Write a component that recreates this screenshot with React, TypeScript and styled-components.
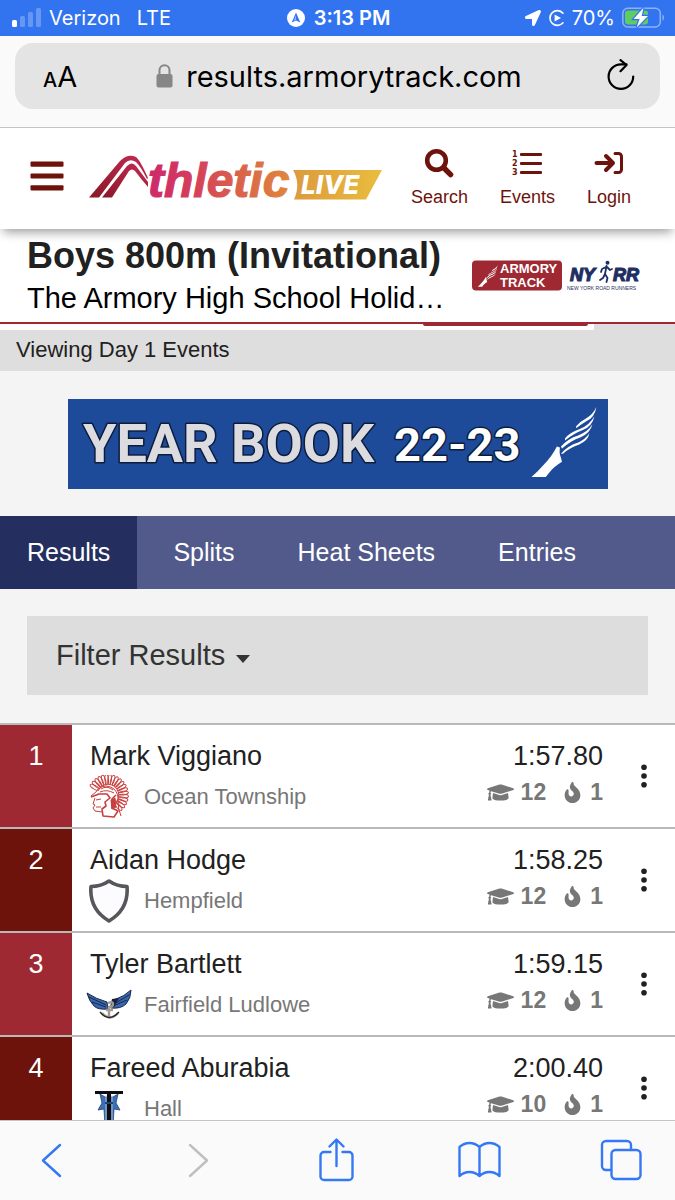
import React, { ReactElement } from "react";
import { FaFire, FaGraduationCap, FaLocationArrow } from "react-icons/fa";
import styled, { createGlobalStyle } from "styled-components";

export enum Theme {
  CHROME = "chrome",
  STATUSBAR = "statusbar",
  TINT = "tint",
  PAGE = "page",
  WHITE = "white",
  MAROON = "maroon",
  RED = "red",
  TAB = "tab",
  TABACTIVE = "tabactive",
  STRIP = "strip",
  LINE = "line",
  TEXT = "text",
  MUTED = "muted",
}

export const ThemeColors = {
  [Theme.CHROME]: "#fafafa",
  [Theme.STATUSBAR]: "#3274f0",
  [Theme.TINT]: "#3478f6",
  [Theme.PAGE]: "#f4f4f4",
  [Theme.WHITE]: "#ffffff",
  [Theme.MAROON]: "#6d130c",
  [Theme.RED]: "#9e2932",
  [Theme.TAB]: "#525a8b",
  [Theme.TABACTIVE]: "#242f60",
  [Theme.STRIP]: "#dedede",
  [Theme.LINE]: "#b9b9b9",
  [Theme.TEXT]: "#212121",
  [Theme.MUTED]: "#777777",
};

const GlobalStyle = createGlobalStyle`
  * {
    box-sizing: border-box;
  }
  body {
    margin: 0;
    background-color: ${ThemeColors.page};
    color: ${ThemeColors.text};
    font-family: "Liberation Sans", Arial, sans-serif;
  }
  button {
    padding: 0;
    border: 0;
    background: none;
    color: inherit;
    font: inherit;
    cursor: pointer;
  }
  a {
    color: inherit;
    text-decoration: none;
  }
  svg {
    display: block;
    flex: none;
  }
`;

const Screen = styled.div`
  display: flex;
  flex-direction: column;
  height: 100vh;
`;

const StatusBar = styled.div`
  display: grid;
  grid-template-columns: 1fr auto 1fr;
  align-items: center;
  height: 36px;
  padding: 0 10px 0 12px;
  background-color: ${ThemeColors.statusbar};
  color: ${ThemeColors.white};
  font-family: Inter, sans-serif;
  font-size: 20px;
`;

const StatusGroup = styled.div<{ $align?: string; $gap?: number }>`
  display: flex;
  align-items: center;
  justify-content: ${({ $align }) => $align || "flex-start"};
  gap: ${({ $gap }) => $gap || 7}px;
`;

const Carrier = styled.span`
  margin-right: 9px;
`;

const Clock = styled.time`
  font-weight: 600;
`;

const AddressBar = styled.div`
  padding: 7px 15px 18px;
  border-bottom: 1px solid #c3c6c9;
  background-color: ${ThemeColors.chrome};
`;

const AddressField = styled.div`
  display: grid;
  grid-template-columns: 1fr auto 1fr;
  align-items: center;
  height: 66px;
  padding: 0 25px 0 28px;
  border-radius: 18px;
  background-color: #e5e4e5;
  color: #000000;
  font-family: Inter, sans-serif;
`;

const TextSizeButton = styled.button`
  justify-self: start;
  font-size: 29px;
  small {
    font-size: 20px;
    font-weight: 500;
  }
`;

const AddressButton = styled.button`
  display: flex;
  align-items: center;
  gap: 13px;
  font-size: 29px;
`;

const ReloadButton = styled.button`
  justify-self: end;
`;

const Viewport = styled.main`
  flex: 1;
  min-height: 0;
  overflow: hidden;
`;

const SiteHeader = styled.header`
  position: relative;
  z-index: 1;
  display: flex;
  align-items: center;
  height: 101px;
  padding: 0 44px 6px 30px;
  background-color: ${ThemeColors.white};
  box-shadow: 0 6px 10px -3px rgba(0, 0, 0, 0.4);
  color: ${ThemeColors.maroon};
`;

const SiteLogo = styled.a`
  margin-left: 24px;
`;

const SiteNav = styled.nav`
  display: flex;
  gap: 32px;
  margin-left: auto;
  padding-top: 4px;
`;

const SiteNavLink = styled.a`
  display: flex;
  flex-direction: column;
  align-items: center;
  gap: 8px;
  font-size: 18px;
  line-height: 22px;
`;

const EventHeader = styled.section`
  display: flex;
  align-items: center;
  gap: 24px;
  height: 95px;
  padding: 0 33px 0 27px;
  border-bottom: 2px solid ${ThemeColors.red};
  background-color: ${ThemeColors.white};
`;

const EventTitles = styled.div`
  flex: 1;
  min-width: 0;
`;

const EventTitle = styled.h1`
  margin: 0;
  font-size: 36px;
  line-height: 44px;
  white-space: nowrap;
`;

const MeetTitle = styled.div`
  overflow: hidden;
  color: #000000;
  font-size: 29px;
  line-height: 40px;
  text-overflow: ellipsis;
  white-space: nowrap;
`;

const Sponsors = styled.div`
  display: flex;
  gap: 5px;
`;

const DayStrip = styled.div`
  background-color: ${ThemeColors.strip};
`;

/* bottom edge of the full header that has scrolled behind the sticky one */
const ScrolledEdge = styled.div`
  display: flex;
  justify-content: flex-end;
  width: 88%;
  height: 6px;
  padding-right: 6px;
  background-color: ${ThemeColors.white};
  &::after {
    content: "";
    width: 28%;
    height: 2px;
    border-radius: 0 0 4px 4px;
    background-color: ${ThemeColors.red};
  }
`;

const DayLabel = styled.p`
  margin: 0;
  padding: 6px 16px 7px;
  font-size: 22px;
  line-height: 28px;
`;

const Banner = styled.a`
  display: flex;
  justify-content: center;
  padding: 28px 0 27px;
`;

const Tabs = styled.nav`
  display: flex;
  gap: 9px;
  background-color: ${ThemeColors.tab};
`;

const Tab = styled.button<{ $active?: boolean }>`
  height: 73px;
  padding: 0 27px;
  background-color: ${({ $active }) =>
    $active ? ThemeColors.tabactive : "transparent"};
  color: ${ThemeColors.white};
  font-size: 25px;
`;

const FilterButton = styled.button`
  display: flex;
  align-items: center;
  gap: 11px;
  width: calc(100% - 54px);
  height: 79px;
  margin: 27px 27px 28px;
  padding: 0 29px;
  background-color: #dddddd;
  color: #333333;
  font-size: 29px;
`;

const Caret = styled.span`
  margin-top: 6px;
  border-top: 8px solid currentColor;
  border-right: 7px solid transparent;
  border-left: 7px solid transparent;
`;

const ResultList = styled.ol`
  margin: 0;
  padding: 0;
  list-style: none;
`;

const ResultRow = styled.li`
  display: flex;
  border-top: 2px solid ${ThemeColors.line};
  background-color: ${ThemeColors.white};
  font-size: 27px;
  line-height: 30px;
`;

const Rank = styled.div<{ $even: boolean }>`
  width: 72px;
  padding-top: 16px;
  background-color: ${({ $even }) =>
    $even ? ThemeColors.maroon : ThemeColors.red};
  color: ${ThemeColors.white};
  text-align: center;
`;

const Athlete = styled.div`
  flex: 1;
  padding: 16px 0 9px 16px;
`;

const AthleteName = styled.div`
  padding-left: 2px;
`;

const Team = styled.div`
  display: flex;
  align-items: center;
  gap: 14px;
  height: 42px;
  margin-top: 5px;
  color: ${ThemeColors.muted};
  font-size: 22px;
`;

const CrestBox = styled.span`
  display: flex;
  justify-content: center;
  width: 42px;
`;

const Mark = styled.div`
  padding-top: 16px;
  text-align: right;
`;

const Stats = styled.div`
  display: flex;
  align-items: center;
  justify-content: flex-end;
  margin-top: 7px;
  color: ${ThemeColors.muted};
  font-size: 23px;
  font-weight: bold;
  line-height: 28px;
`;

const Stat = styled.span`
  display: flex;
  align-items: center;
  gap: 7px;
  margin-left: 16px;
`;

const MenuButton = styled.button`
  display: grid;
  justify-content: center;
  align-content: center;
  width: 62px;
  margin-left: 10px;
`;

const Toolbar = styled.nav`
  display: flex;
  justify-content: space-between;
  align-items: center;
  height: 80px;
  padding: 0 32px 2px 29px;
  border-top: 1px solid #c4c4c4;
  background-color: ${ThemeColors.chrome};
  color: ${ThemeColors.tint};
`;

const ToolbarButton = styled.button`
  width: 44px;
  height: 44px;
  &:disabled {
    color: #bfbfbf;
  }
`;

const SignalIcon = (): ReactElement => (
  <svg width="30" height="20" viewBox="0 0 30 20" fill="#fff">
    <rect x="0" y="12" width="5" height="7" rx="1.5" />
    <g opacity="0.25">
      <rect x="8" y="8" width="5" height="11" rx="1.5" />
      <rect x="16" y="4" width="5" height="15" rx="1.5" />
      <rect x="24" y="0" width="5" height="19" rx="1.5" />
    </g>
  </svg>
);

const NavigationIcon = (): ReactElement => (
  <svg width="18" height="18" viewBox="0 0 18 18">
    <circle cx="9" cy="9" r="9" fill="#fff" />
    <path
      d="M9 3.4l4.3 10.2L9 11.4l-4.3 2.2z"
      fill={ThemeColors.statusbar}
    />
    <path d="M9 6.2v4.6l-2.3 1z" fill="#fff" opacity="0.5" />
  </svg>
);

const CarPlayIcon = (): ReactElement => (
  <svg width="17" height="18" viewBox="0 0 17 18" fill="none">
    <path
      d="M15 4.2A7.4 7.4 0 1 0 15 13.8"
      stroke="#fff"
      strokeWidth="1.6"
      strokeLinecap="round"
    />
    <path d="M6.6 5.6l6.4 3.4-6.4 3.4z" fill="#fff" />
  </svg>
);

const BatteryIcon = (): ReactElement => (
  <svg width="43" height="22" viewBox="0 0 43 22" fill="none">
    <rect
      x="0.8"
      y="1.3"
      width="37.5"
      height="18.6"
      rx="5"
      stroke="#fff"
      strokeOpacity="0.45"
      strokeWidth="1.5"
    />
    <path d="M40.5 7.5c2 1.2 2 5 0 6.2z" fill="#fff" opacity="0.45" />
    <rect x="3" y="3.6" width="23" height="14" rx="3" fill="#5fcb63" />
    <path
      d="M21.5 0.8L11.6 12h6l-3 8.4L26 8.9h-6.3z"
      fill="#fff"
      stroke={ThemeColors.statusbar}
      strokeWidth="2.4"
      paintOrder="stroke"
    />
  </svg>
);

const LockIcon = (): ReactElement => (
  <svg width="17" height="24" viewBox="0 0 17 24">
    <path
      d="M3.5 11V6.3a5 5 0 0 1 10 0V11"
      fill="none"
      stroke="#868686"
      strokeWidth="2"
    />
    <rect x="0.5" y="10" width="16" height="13.5" rx="2" fill="#868686" />
  </svg>
);

const ReloadIcon = (): ReactElement => (
  <svg
    width="28"
    height="34"
    viewBox="0 0 28 34"
    fill="none"
    stroke="#000"
    strokeWidth="2.2"
    strokeLinecap="round"
    strokeLinejoin="round"
  >
    <path d="M26.2 17.5A12.3 12.3 0 1 1 14 5.3h5.5" />
    <path d="M13.5 1.1l6 4.9-6 6.2" />
  </svg>
);

const MenuIcon = (): ReactElement => (
  <svg width="34" height="30" viewBox="0 0 34 30" fill="currentColor">
    <rect x="0.5" y="0.5" width="33" height="5.2" rx="1" />
    <rect x="0.5" y="12.4" width="33" height="5.2" rx="1" />
    <rect x="0.5" y="24.2" width="33" height="5.2" rx="1" />
  </svg>
);

const AthleticLiveLogo = (): ReactElement => (
  <svg width="296" height="54" viewBox="0 -4 296 54">
    <defs>
      <linearGradient id="peak" x1="0" y1="1" x2="0.8" y2="0">
        <stop offset="0" stopColor="#8a1826" />
        <stop offset="1" stopColor="#bd2950" />
      </linearGradient>
      <linearGradient
        id="word"
        gradientUnits="userSpaceOnUse"
        x1="60"
        y1="0"
        x2="206"
        y2="0"
      >
        <stop offset="0" stopColor="#cc2a6b" />
        <stop offset="0.3" stopColor="#d43d5b" />
        <stop offset="0.6" stopColor="#d9604c" />
        <stop offset="1" stopColor="#e08a3a" />
      </linearGradient>
      <linearGradient id="live" x1="0" y1="0" x2="1" y2="0">
        <stop offset="0" stopColor="#dd9a3c" />
        <stop offset="1" stopColor="#e9bd3f" />
      </linearGradient>
    </defs>
    <path
      d="M1 44.5L32 8Q40 0 48 4Q52 7 60 25L59 26Q53 14 48 9Q42 5 37 10L11 44.5z"
      fill="url(#peak)"
    />
    <path
      d="M14 44.5L39 13Q44 8 48 13L60 29V34Q53 26 47 18Q44 15 41 18L24 44.5z"
      fill="url(#peak)"
    />
    <text
      x="60"
      y="44"
      fill="url(#word)"
      stroke="url(#word)"
      strokeWidth="1.2"
      fontFamily="Liberation Sans, sans-serif"
      fontSize="48"
      fontStyle="italic"
      fontWeight="bold"
    >
      thletic
    </text>
    <path d="M205 17H294L278 46.5H206Q213 31 205 17z" fill="url(#live)" />
    <text
      x="213"
      y="41"
      fill="#fff"
      fontFamily="Inter, Liberation Sans, sans-serif"
      fontSize="26"
      fontStyle="italic"
      fontWeight="800"
    >
      LIVE
    </text>
  </svg>
);

const SearchIcon = (): ReactElement => (
  <svg
    width="30"
    height="30"
    viewBox="0 0 30 30"
    fill="none"
    stroke="currentColor"
    strokeWidth="4.6"
  >
    <circle cx="12.5" cy="12.5" r="9.3" />
    <path d="M20 20l6.6 6.6" strokeWidth="5.4" strokeLinecap="round" />
  </svg>
);

const EventsIcon = (): ReactElement => (
  <svg
    width="30"
    height="30"
    viewBox="0 0 30 30"
    fill="currentColor"
    fontFamily="DejaVu Sans, sans-serif"
    fontSize="8"
    fontWeight="bold"
  >
    <text x="0" y="9">1</text>
    <text x="0" y="18">2</text>
    <text x="0" y="27">3</text>
    <rect x="8" y="5" width="22" height="3" rx="1" />
    <rect x="8" y="14" width="22" height="3" rx="1" />
    <rect x="8" y="23" width="22" height="3" rx="1" />
  </svg>
);

const LoginIcon = (): ReactElement => (
  <svg
    width="30"
    height="30"
    viewBox="0 0 30 30"
    fill="none"
    stroke="currentColor"
    strokeWidth="4"
    strokeLinecap="round"
    strokeLinejoin="round"
  >
    <path d="M2.5 15H18M12 8l7 7-7 7" />
    <path d="M21 5.5h3.500a3 3 0 0 1 3 3v13a3 3 0 0 1-3 3H21" strokeWidth="3" />
  </svg>
);

/* winged foot shared by the banner and the Armory badge */
const WingedFoot = (): ReactElement => (
  <g fill="#fff">
    <path d="M0 69Q6 64 12 57Q20 49 25 39L28 40Q27 46 29 50L30 54Q22 59 18 64L14 69z" />
    <path d="M29 46Q36 38 46 35Q53 32 57 26Q56 33 47 37Q38 40 31 46z" />
    <path d="M29 39Q36 31 46 28Q56 24 60 17Q58 26 48 30Q39 33 30 41z" />
    <path d="M33 31Q38 25 47 22Q57 18 62 9Q60 19 50 23Q42 26 33 33z" />
    <path d="M44 19Q48 14 54 11Q60 8 64 0Q62 11 54 14Q49 17 44 21z" />
  </g>
);

const ArmoryTrackLogo = (): ReactElement => (
  <svg width="90" height="31" viewBox="0 0 90 31">
    <rect width="90" height="30" y="0.5" rx="4" fill={ThemeColors.red} />
    <svg x="5" y="5" width="22" height="22" viewBox="0 0 65 70">
      <WingedFoot />
    </svg>
    <g
      fill="#fff"
      fontFamily="Liberation Sans, sans-serif"
      fontSize="13"
      fontWeight="bold"
    >
      <text x="28" y="13">ARMORY</text>
      <text x="28" y="27">TRACK</text>
    </g>
  </svg>
);

const RoadRunnersLogo = (): ReactElement => (
  <svg width="75" height="31" viewBox="0 0 75 31" fill="#1f2f63">
    <g
      fontFamily="Liberation Sans, sans-serif"
      fontSize="18"
      fontStyle="italic"
      fontWeight="bold"
      stroke="#1f2f63"
      strokeWidth="1.2"
    >
      <text x="3" y="21">NY</text>
      <text x="46" y="21">RR</text>
    </g>
    <circle cx="40.5" cy="2.8" r="2" />
    <path
      d="M39.5 6l-1.5 8 2.500 4-1 4M38 14l-2 4-3 2M39 7l-4 2-1 3M40 7l3 3 2-1"
      fill="none"
      stroke="#1f2f63"
      strokeWidth="1.8"
      strokeLinecap="round"
      strokeLinejoin="round"
    />
    <text
      x="0"
      y="30"
      fontFamily="Liberation Sans, sans-serif"
      fontSize="5"
    >
      NEW YORK ROAD RUNNERS
    </text>
  </svg>
);

const YearBookBanner = (): ReactElement => (
  <svg width="540" height="90" viewBox="0 0 540 90">
    <rect width="540" height="90" fill="#1d4b9a" />
    <g
      fontFamily="Roboto, Liberation Sans, sans-serif"
      fontWeight="bold"
      stroke="#0c1c3c"
      strokeWidth="3"
      strokeLinejoin="round"
      paintOrder="stroke"
    >
      <text x="15" y="63" fontSize="54" fill="#dcdce0">
        YEAR BOOK
      </text>
      <text x="326" y="62" fontSize="47" fill="#fff">
        22-23
      </text>
    </g>
    <svg x="462" y="8" width="70" height="71" viewBox="0 0 66 70">
      <WingedFoot />
    </svg>
  </svg>
);

const plumeAngles = Array.from({ length: 19 }, (_, i) => -150 + i * 11);

const TrojanCrest = (): ReactElement => (
  <svg
    width="42"
    height="44"
    viewBox="0 0 42 44"
    fill="none"
    stroke="#c8403f"
    strokeWidth="1"
    strokeLinejoin="round"
  >
    {plumeAngles.map((angle) => {
      const rad = (angle * Math.PI) / 180;
      const x = 20 + Math.cos(rad) * 15.5;
      const y = 20 + Math.sin(rad) * 15.5;
      return (
        <ellipse
          key={angle}
          cx={x}
          cy={y}
          rx="5"
          ry="1.8"
          transform={`rotate(${angle} ${x} ${y})`}
        />
      );
    })}
    <path d="M3 21Q9 17 10 14Q18 8 26 14Q31 19 30 27Q30 34 33 41" />
    <path
      d="M3 22L11 19L19 19L22 23L17 27L18 31L14 34L15 41L26 42L30 36L24 33L24 24L28 20"
      strokeWidth="1.6"
    />
    <path d="M7 23L5 29L7 30L5 33L7 36L14 37M8 25l5-1M8 32h5" />
    <path d="M23 25l4-2 1 9-4 2z" fill="#c8403f" />
    <path d="M13 14q6-4 12 1M12 17q7-3 14 1" />
  </svg>
);

const ShieldCrest = (): ReactElement => (
  <svg width="42" height="44" viewBox="0 0 42 44">
    <path
      d="M21 2Q29 7.5 39 7.5Q41 30 21 42Q1 30 3 7.5Q13 7.5 21 2z"
      fill="#fcfcff"
      stroke="#55575a"
      strokeWidth="3.6"
      strokeLinejoin="round"
    />
  </svg>
);

const FalconCrest = (): ReactElement => (
  <svg width="46" height="32" viewBox="0 0 46 32">
    <path
      d="M1 4Q10 10 21 13L22 20Q12 21 8 17Q3 12 1 4zM45 1Q39 7 28 11L25 19Q35 20 40 15Q45 9 45 1z"
      fill="#3767b0"
      stroke="#1b2747"
      strokeWidth="1"
    />
    <path
      d="M3 8l17 8M6 13l14 5M43 6L28 15M41 11l-14 6"
      stroke="#1b2747"
      strokeWidth="1"
    />
    <path d="M26 10l7-1-5 9h-4z" fill="#17213c" />
    <path
      d="M22 14q5-2 5 1t-4 3v9M20 21h7M16 24q8 9 16 0"
      fill="none"
      stroke="#a29b91"
      strokeWidth="2.4"
    />
    <path
      d="M14 23q9 11 19 0"
      fill="none"
      stroke="#25262c"
      strokeWidth="1.3"
    />
  </svg>
);

const HallCrest = (): ReactElement => (
  <svg width="42" height="42" viewBox="0 0 42 42">
    <path
      d="M12 6L17 9H25L30 6L28 15L32 22L26 21L25 38L21 41L17 38L16 21L10 22L14 15z"
      fill="#3a70b8"
      stroke="#1d4377"
      strokeWidth="0.8"
    />
    <path d="M7 3H35V6H23V41H19V6H7z" fill="#0d0d12" />
    <path d="M18 7v32M24 7v32" stroke="#c8cdd6" strokeWidth="0.8" />
    <path d="M17 15h8" stroke="#1d4377" strokeWidth="2" />
  </svg>
);

const KebabIcon = (): ReactElement => (
  <svg width="6" height="24" viewBox="0 0 6 24" fill={ThemeColors.text}>
    <circle cx="3" cy="3.3" r="2.8" />
    <circle cx="3" cy="12" r="2.8" />
    <circle cx="3" cy="20.7" r="2.8" />
  </svg>
);

const toolbarStroke = {
  width: 44,
  height: 44,
  viewBox: "0 0 44 44",
  fill: "none",
  stroke: "currentColor",
  strokeWidth: 2.4,
  strokeLinecap: "round" as const,
  strokeLinejoin: "round" as const,
};

const tabs = ["Results", "Splits", "Heat Sheets", "Entries"];

type Result = {
  name: string;
  school: string;
  crest: ReactElement;
  time: string;
  grade: number;
  heat: number;
};

const results: Result[] = [
  {
    name: "Mark Viggiano",
    school: "Ocean Township",
    crest: <TrojanCrest />,
    time: "1:57.80",
    grade: 12,
    heat: 1,
  },
  {
    name: "Aidan Hodge",
    school: "Hempfield",
    crest: <ShieldCrest />,
    time: "1:58.25",
    grade: 12,
    heat: 1,
  },
  {
    name: "Tyler Bartlett",
    school: "Fairfield Ludlowe",
    crest: <FalconCrest />,
    time: "1:59.15",
    grade: 12,
    heat: 1,
  },
  {
    name: "Fareed Aburabia",
    school: "Hall",
    crest: <HallCrest />,
    time: "2:00.40",
    grade: 10,
    heat: 1,
  },
];

type ResultItemProps = {
  result: Result;
  rank: number;
};

const ResultItem = ({ result, rank }: ResultItemProps): ReactElement => (
  <ResultRow>
    <Rank $even={rank % 2 === 0}>{rank}</Rank>
    <Athlete>
      <AthleteName>{result.name}</AthleteName>
      <Team>
        <CrestBox>{result.crest}</CrestBox>
        {result.school}
      </Team>
    </Athlete>
    <Mark>
      <div>{result.time}</div>
      <Stats>
        <Stat>
          <FaGraduationCap size={27} />
          {result.grade}
        </Stat>
        <Stat>
          <FaFire size={21} />
          {result.heat}
        </Stat>
      </Stats>
    </Mark>
    <MenuButton aria-label={`More about ${result.name}`}>
      <KebabIcon />
    </MenuButton>
  </ResultRow>
);

export default function App(): ReactElement {
  return (
    <Screen>
      <GlobalStyle />
      <StatusBar>
        <StatusGroup>
          <SignalIcon />
          <Carrier>Verizon</Carrier>
          <span>LTE</span>
        </StatusGroup>
        <StatusGroup $gap={9}>
          <NavigationIcon />
          <Clock>3:13 PM</Clock>
        </StatusGroup>
        <StatusGroup $align="flex-end">
          <FaLocationArrow size={16} />
          <CarPlayIcon />
          <span>70%</span>
          <BatteryIcon />
        </StatusGroup>
      </StatusBar>
      <AddressBar>
        <AddressField>
          <TextSizeButton aria-label="Page settings">
            <small>A</small>A
          </TextSizeButton>
          <AddressButton>
            <LockIcon />
            results.armorytrack.com
          </AddressButton>
          <ReloadButton aria-label="Reload">
            <ReloadIcon />
          </ReloadButton>
        </AddressField>
      </AddressBar>
      <Viewport>
        <SiteHeader>
          <button aria-label="Menu">
            <MenuIcon />
          </button>
          <SiteLogo href="#home" aria-label="AthleticLIVE">
            <AthleticLiveLogo />
          </SiteLogo>
          <SiteNav>
            <SiteNavLink href="#search">
              <SearchIcon />
              Search
            </SiteNavLink>
            <SiteNavLink href="#events">
              <EventsIcon />
              Events
            </SiteNavLink>
            <SiteNavLink href="#login">
              <LoginIcon />
              Login
            </SiteNavLink>
          </SiteNav>
        </SiteHeader>
        <EventHeader>
          <EventTitles>
            <EventTitle>Boys 800m (Invitational)</EventTitle>
            <MeetTitle>The Armory High School Holiday Classic</MeetTitle>
          </EventTitles>
          <Sponsors>
            <ArmoryTrackLogo />
            <RoadRunnersLogo />
          </Sponsors>
        </EventHeader>
        <DayStrip>
          <ScrolledEdge />
          <DayLabel>Viewing Day 1 Events</DayLabel>
        </DayStrip>
        <Banner href="#yearbook">
          <YearBookBanner />
        </Banner>
        <Tabs>
          {tabs.map((tab, index) => (
            <Tab key={tab} $active={index === 0}>
              {tab}
            </Tab>
          ))}
        </Tabs>
        <FilterButton>
          Filter Results
          <Caret />
        </FilterButton>
        <ResultList>
          {results.map((result, index) => (
            <ResultItem key={result.name} result={result} rank={index + 1} />
          ))}
        </ResultList>
      </Viewport>
      <Toolbar>
        <ToolbarButton aria-label="Back">
          <svg {...toolbarStroke}>
            <path d="M31 7L14 22.5L31 38" />
          </svg>
        </ToolbarButton>
        <ToolbarButton aria-label="Forward" disabled>
          <svg {...toolbarStroke}>
            <path d="M18 7L35 22.5L18 38" />
          </svg>
        </ToolbarButton>
        <ToolbarButton aria-label="Share">
          <svg {...toolbarStroke}>
            <path d="M16.5 14H10a3.5 3.5 0 0 0-3.500 3.500v21A3.5 3.5 0 0 0 10 42h25a3.5 3.5 0 0 0 3.500-3.500v-21A3.5 3.5 0 0 0 35 14h-6.500" />
            <path d="M22.5 28V2M15.5 8.5L22.5 1.5L29.5 8.5" />
          </svg>
        </ToolbarButton>
        <ToolbarButton aria-label="Bookmarks">
          <svg {...toolbarStroke}>
            <path d="M22.500 9Q18 5 12.500 5Q7 5 2.500 9V38Q7 34 12.500 34Q18 34 22.500 38Q27 34 32.500 34Q38 34 42.500 38V9Q38 5 32.500 5Q27 5 22.500 9zM22.500 9V38" />
          </svg>
        </ToolbarButton>
        <ToolbarButton aria-label="Tabs">
          <svg {...toolbarStroke}>
            <path d="M12 32H7a4 4 0 0 1-4-4V7a4 4 0 0 1 4-4h21a4 4 0 0 1 4 4v5" />
            <rect x="12.5" y="12" width="29" height="29" rx="4" />
          </svg>
        </ToolbarButton>
      </Toolbar>
    </Screen>
  );
}
